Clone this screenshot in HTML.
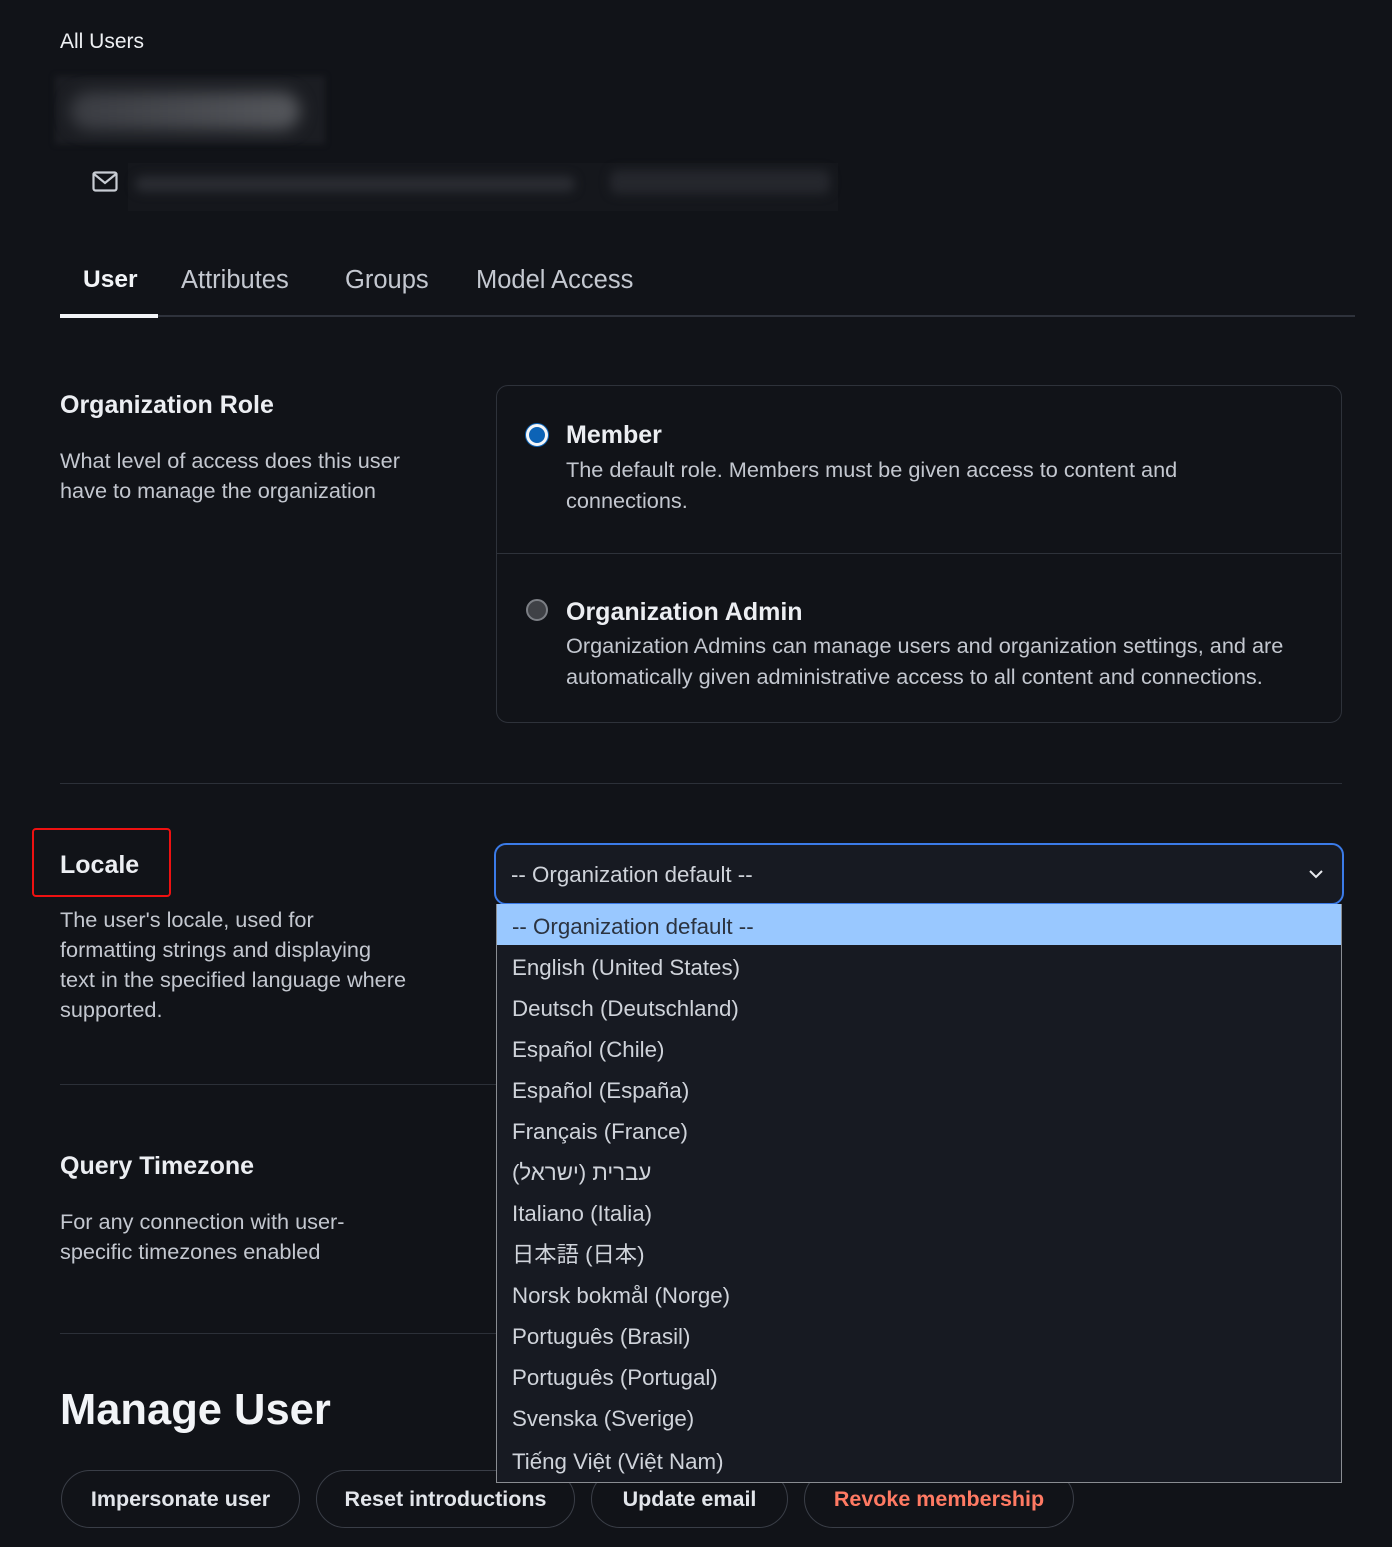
<!DOCTYPE html>
<html><head><meta charset="utf-8"><style>
*{box-sizing:border-box;margin:0;padding:0}
body{width:1392px;height:1547px;background:#111318;color:#e8eaee;font-family:"Liberation Sans","Noto Sans CJK JP",sans-serif;position:relative;overflow:hidden}
.a{position:absolute;white-space:nowrap}
.tab{font-size:25.5px;color:#c4c8d0;top:266px}
.h{font-size:25px;font-weight:bold;color:#eceef2}
.p{font-size:21.7px;color:#c3c7cf;line-height:30px;white-space:normal}
.hr{position:absolute;height:1px;background:#2c3038;left:60px}
.btn{position:absolute;top:1470px;height:58px;border:1px solid #3a3e47;border-radius:29px;font-size:21.5px;font-weight:bold;color:#e2e5ea;display:flex;align-items:center;justify-content:center;background:#111318}
.opt{position:absolute;left:15px;font-size:22.3px;color:#cfd3da;height:41px;line-height:41px;white-space:nowrap}
</style></head><body>
<div class="a" style="left:60px;top:30px;font-size:21px;color:#eef0f3">All Users</div>
<div class="a" style="left:55px;top:76px;width:270px;height:68px;background:#1b1d22;filter:blur(3px)"></div>
<div class="a" style="left:70px;top:92px;width:230px;height:38px;border-radius:20px;background:linear-gradient(90deg,#3a3c42,#55575c);filter:blur(8px)"></div>
<svg class="a" style="left:92px;top:171px" width="26" height="22" viewBox="0 0 26 22"><rect x="1.5" y="1.5" width="23" height="18" rx="2" fill="none" stroke="#c8ccd3" stroke-width="2.2"/><path d="M2 3l11 9 11-9" fill="none" stroke="#c8ccd3" stroke-width="2.2"/></svg>
<div class="a" style="left:128px;top:163px;width:710px;height:48px;background:#15171c"></div>
<div class="a" style="left:135px;top:176px;width:440px;height:16px;border-radius:8px;background:#2a2c32;filter:blur(5px)"></div>
<div class="a" style="left:610px;top:170px;width:220px;height:24px;border-radius:8px;background:#25272d;filter:blur(5px)"></div>
<div class="a tab" style="left:83px;color:#f2f4f7;font-weight:bold;font-size:24.5px">User</div>
<div class="a tab" style="left:181px">Attributes</div>
<div class="a tab" style="left:345px">Groups</div>
<div class="a tab" style="left:476px">Model Access</div>
<div class="a" style="left:60px;top:315px;width:1295px;height:2px;background:#2e323b"></div>
<div class="a" style="left:60px;top:314px;width:98px;height:4px;background:#f2f4f7"></div>

<div class="a h" style="left:60px;top:391px">Organization Role</div>
<div class="a p" style="left:60px;top:446px;width:380px">What level of access does this user have to manage the organization</div>
<div class="a" style="left:496px;top:385px;width:846px;height:338px;border:1px solid #2e323a;border-radius:12px"></div>
<div class="a" style="left:497px;top:553px;width:844px;height:1px;background:#2e323a"></div>
<div class="a" style="left:526px;top:424px;width:22px;height:22px;border-radius:50%;border:3px solid #f4f6f8;background:#0c63b6;box-shadow:0 0 0 1px #0c63b6"></div>
<div class="a h" style="left:566px;top:421px">Member</div>
<div class="a p" style="left:566px;top:454px;width:650px;line-height:31px">The default role. Members must be given access to content and connections.</div>
<div class="a" style="left:526px;top:599px;width:22px;height:22px;border-radius:50%;border:2px solid #7c7f85;background:#3f4146"></div>
<div class="a h" style="left:566px;top:598px">Organization Admin</div>
<div class="a p" style="left:566px;top:630px;width:760px;line-height:31px">Organization Admins can manage users and organization settings, and are automatically given administrative access to all content and connections.</div>

<div class="hr" style="top:783px;width:1282px"></div>
<div class="a" style="left:32px;top:828px;width:139px;height:69px;border:2px solid #e11;border-radius:4px"></div>
<div class="a h" style="left:60px;top:851px">Locale</div>
<div class="a p" style="left:60px;top:905px;width:420px">The user's locale, used for<br>formatting strings and displaying<br>text in the specified language where<br>supported.</div>
<div class="hr" style="top:1084px;width:440px"></div>
<div class="a h" style="left:60px;top:1152px">Query Timezone</div>
<div class="a p" style="left:60px;top:1207px;width:320px">For any connection with user-specific timezones enabled</div>
<div class="hr" style="top:1333px;width:440px"></div>
<div class="a" style="left:60px;top:1386px;font-size:43.5px;font-weight:bold;color:#f2f4f7">Manage User</div>

<div class="btn" style="left:61px;width:239px">Impersonate user</div>
<div class="btn" style="left:316px;width:259px">Reset introductions</div>
<div class="btn" style="left:591px;width:197px">Update email</div>
<div class="btn" style="left:804px;width:270px;color:#ff7a63">Revoke membership</div>

<div class="a" style="left:494px;top:843px;width:850px;height:62px;border:2px solid #3b7be8;border-radius:12px;background:#171a22"></div>
<div class="a" style="left:511px;top:862px;font-size:22.3px;color:#cfd3da">-- Organization default --</div>
<svg class="a" style="left:1308px;top:868px" width="16" height="12" viewBox="0 0 16 12"><path d="M2 3l6 6 6-6" fill="none" stroke="#e8eaee" stroke-width="2"/></svg>

<div class="a" style="left:496px;top:904px;width:846px;height:579px;background:#171a22;border:1px solid #8a8d92;border-top:none">
<div class="a" style="left:0;top:0;width:844px;height:41px;background:#99c8ff"></div>
<div class="opt" style="top:2px;color:#2b3340">-- Organization default --</div>
<div class="opt" style="top:43px">English (United States)</div>
<div class="opt" style="top:84px">Deutsch (Deutschland)</div>
<div class="opt" style="top:125px">Español (Chile)</div>
<div class="opt" style="top:166px">Español (España)</div>
<div class="opt" style="top:207px">Français (France)</div>
<div class="opt" style="top:248px" dir="rtl">עברית (ישראל)</div>
<div class="opt" style="top:289px">Italiano (Italia)</div>
<div class="opt" style="top:330px">日本語 (日本)</div>
<div class="opt" style="top:371px">Norsk bokmål (Norge)</div>
<div class="opt" style="top:412px">Português (Brasil)</div>
<div class="opt" style="top:453px">Português (Portugal)</div>
<div class="opt" style="top:494px">Svenska (Sverige)</div>
<div class="opt" style="top:537px">Tiếng Việt (Việt Nam)</div>
</div>
</body></html>
